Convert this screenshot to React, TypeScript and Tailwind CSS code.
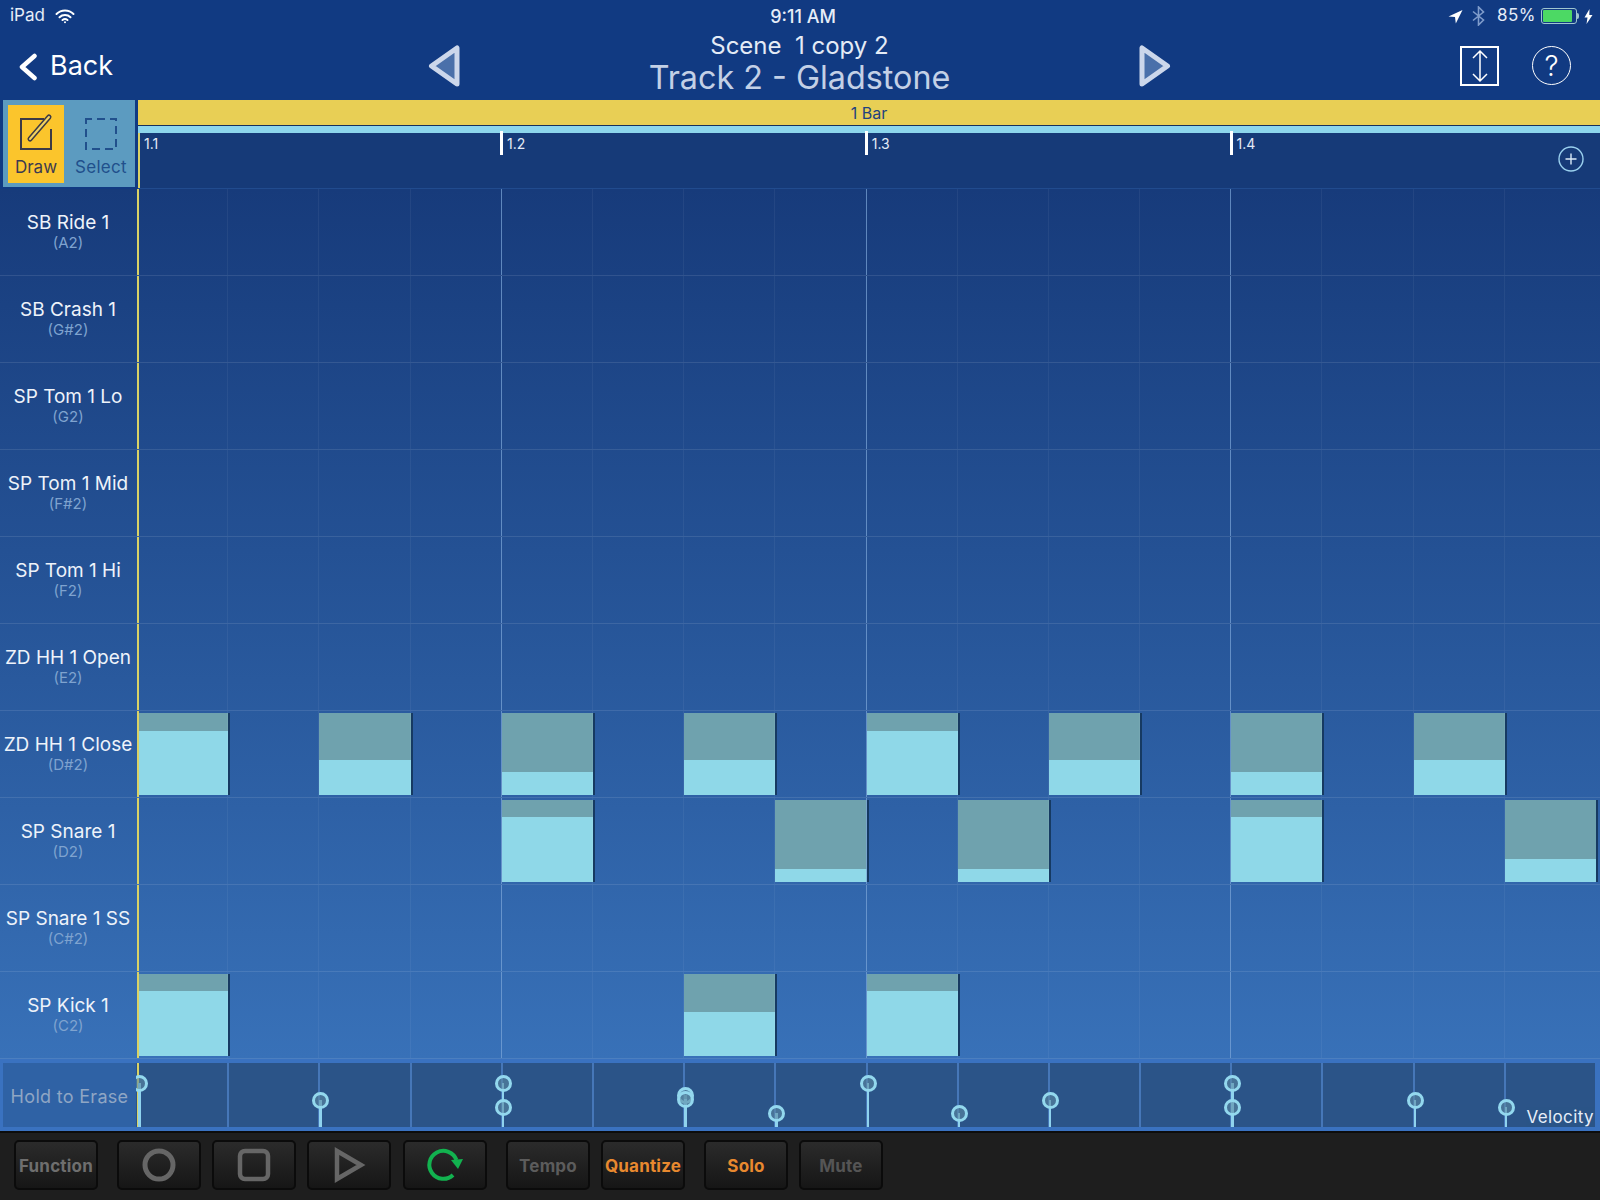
const rows = [
  { name: "SB Ride 1", note: "(A2)" },
  { name: "SB Crash 1", note: "(G#2)" },
  { name: "SP Tom 1 Lo", note: "(G2)" },
  { name: "SP Tom 1 Mid", note: "(F#2)" },
  { name: "SP Tom 1 Hi", note: "(F2)" },
  { name: "ZD HH 1 Open", note: "(E2)" },
  { name: "ZD HH 1 Close", note: "(D#2)" },
  { name: "SP Snare 1", note: "(D2)" },
  { name: "SP Snare 1 SS", note: "(C#2)" },
  { name: "SP Kick 1", note: "(C2)" },
];

// step -> height of the light part of the note, per row
const notes: Record<number, Record<number, number>> = {
  6: { 0: 64, 2: 35, 4: 23, 6: 35, 8: 64, 10: 35, 12: 23, 14: 35 },
  7: { 4: 65, 7: 13, 9: 13, 12: 65, 15: 23 },
  9: { 0: 65, 6: 44, 8: 65 },
};

// step -> pin heights in the velocity strip (y from top of strip)
const pins: Record<number, number[]> = {
  0: [20],
  2: [37],
  4: [20, 44],
  6: [32, 36],
  7: [50],
  8: [20],
  9: [50],
  10: [37],
  12: [20, 44],
  14: [37],
  15: [44],
};

const steps = Array.from({ length: 16 }, (_, i) => i);

function Triangle({ flip }: { flip?: boolean }) {
  return (
    <svg width="34" height="46" viewBox="0 0 34 46" className={flip ? "-scale-x-100" : ""}>
      <polygon
        points="4.500 23 30 5 30 41"
        fill="#4a70aa"
        stroke="#ccd7eb"
        strokeWidth="5"
        strokeLinejoin="round"
      />
    </svg>
  );
}

function StatusBar() {
  return (
    <div className="grid h-[30px] grid-cols-3 items-center pl-[10px] pr-[7px] pt-[2px] text-[17px] text-[#e6edf8]">
      <div className="flex items-center gap-[10px]">
        <span>iPad</span>
        <svg width="20" height="15" viewBox="0 0 20 15" fill="none" stroke="#fff" strokeLinecap="round">
          <path d="M1.5 5a12 12 0 0 1 17 0" strokeWidth="2" />
          <path d="M4.5 8.2a8 8 0 0 1 11 0" strokeWidth="2" />
          <path d="M7.5 11a4 4 0 0 1 5 0" strokeWidth="2" />
          <circle cx="10" cy="13.2" r="1" fill="#fff" stroke="none" />
        </svg>
      </div>
      <div className="pl-[3px] text-center text-[18px] font-medium">9:11 AM</div>
      <div className="flex items-center justify-end">
        <svg width="15" height="15" viewBox="0 0 15 15" fill="#fff">
          <path d="M14.5 1 0.5 7.5l6.5.6.8 6.4z" />
        </svg>
        <svg width="13" height="20" viewBox="0 0 13 20" fill="none" stroke="#7f9ccb" strokeWidth="1.6" className="ml-[9px]">
          <path d="M1 5.5 11.5 14 6.5 19V1l5 5L1 14.500" />
        </svg>
        <span className="ml-[12px] tracking-[0.5px]">85%</span>
        <div className="ml-[5px] flex items-center">
          <div className="h-[16px] w-[36px] rounded-[3px] border border-[#9fc6cf] p-[1px]">
            <div className="h-full w-[29px] rounded-[1px] bg-[#4cd964]" />
          </div>
          <div className="h-[6px] w-[2px] rounded-r-sm bg-[#9fc6cf]" />
        </div>
        <svg width="9" height="15" viewBox="0 0 9 15" fill="#fff" className="ml-[5px]">
          <path d="M5.500 0 0.500 8.500h3L2.500 15l6-9H5.300z" />
        </svg>
      </div>
    </div>
  );
}

function NavBar() {
  return (
    <div className="grid h-[70px] grid-cols-[400px_800px_400px] items-center">
      <div className="flex items-center pl-[18px] pt-[3px]">
        <svg width="20" height="28" viewBox="0 0 20 28" fill="none" stroke="#fff" strokeWidth="4.500" strokeLinecap="round" strokeLinejoin="round">
          <path d="M16.500 3 4 14l12.500 11" />
        </svg>
        <span className="ml-[12px] text-[27px] text-white">Back</span>
      </div>
      <div className="flex items-center justify-between pl-[27px] pr-[28px] pt-[1px]">
        <Triangle />
        <div className="flex flex-col items-center pb-[3px] leading-none">
          <span className="whitespace-pre text-[24px] leading-[28px] text-[#e4ebf6]">Scene  1 copy 2</span>
          <span className="text-[32.300px] leading-[36px] text-[#c3d0e6]">Track 2 - Gladstone</span>
        </div>
        <Triangle flip />
      </div>
      <div className="flex items-center justify-end gap-[33px] pr-[29px] pt-[1px]">
        <div className="flex h-[40px] w-[39px] items-center justify-center border-2 border-white">
          <svg width="16" height="34" viewBox="0 0 16 34" fill="none" stroke="#fff" strokeWidth="1.500">
            <path d="M8 2v30M1 9l7-7 7 7M1 25l7 7 7-7" />
          </svg>
        </div>
        <div className="flex h-[39px] w-[39px] items-center justify-center rounded-full border-[1.500px] border-white text-[28px] font-light leading-none text-white">
          ?
        </div>
      </div>
    </div>
  );
}

function ToolRow() {
  return (
    <div className="flex h-[89px]">
      <div className="ml-[3px] flex h-[87px] w-[132px] shrink-0 bg-[#5c9bc0] pb-[4px] pl-[5px] pt-[5px]">
        <div className="flex w-[56px] shrink-0 flex-col items-center bg-[#fbc52c] pt-[7px]">
          <svg width="40" height="38" viewBox="0 0 40 38" fill="none">
            <path d="M28 7H5v30h30V17" stroke="#3c3a45" strokeWidth="2" />
            <path d="M14 27 33 5" stroke="#3c3a45" strokeWidth="5" strokeLinecap="round" />
            <path d="M14 27 33 5" stroke="#f4d35e" strokeWidth="2" strokeLinecap="round" />
          </svg>
          <span className="mt-[6px] text-[17px] leading-[22px] text-[#3b3a50]">Draw</span>
        </div>
        <div className="flex w-[71px] shrink-0 flex-col items-center pl-[3px] pt-[7px]">
          <svg width="40" height="38" viewBox="0 0 40 38" fill="none">
            <rect x="5" y="7" width="30" height="30" stroke="#21508c" strokeWidth="2" strokeDasharray="8 5" strokeDashoffset="2" />
          </svg>
          <span className="mt-[6px] text-[17px] leading-[22px] tracking-[0.3px] text-[#21508c]">Select</span>
        </div>
      </div>
      <div className="ml-[3px] flex min-w-0 flex-1 flex-col border-b border-[#214b8e] bg-[#163a78]">
        <div className="flex h-[26px] items-center justify-center border-b border-[#17305a] bg-[#e8cf55] text-[16px] text-[#21427f]">
          1 Bar
        </div>
        <div className="h-[7px] bg-[#8dd6ec]" />
        <div className="flex flex-1">
          {["1.1", "1.2", "1.3", "1.4"].map((label, i) => (
            <div
              key={label}
              className={`flex shrink-0 items-start ${i === 0 ? "w-[362px] border-l-2 border-[#d9d266] pl-[2px]" : "w-[364.750px]"}`}
            >
              {i > 0 && <div className="-mt-[2px] h-[24px] w-[3px] bg-white" />}
              <span className={`${i > 0 ? "ml-[4px]" : "ml-[2px]"} mt-[3px] text-[14px] leading-[16px] text-[#e4ebf6]`}>{label}</span>
              {i === 3 && (
                <svg width="26" height="26" viewBox="0 0 26 26" fill="none" stroke="#9ad0ee" strokeWidth="1.400" className="ml-auto mr-[10px] mt-[13px]">
                  <circle cx="13" cy="13" r="12" />
                  <path d="M13 7.500v11M7.500 13h11" stroke="#dbeaf8" />
                </svg>
              )}
            </div>
          ))}
        </div>
      </div>
    </div>
  );
}

function Note({ light }: { light: number }) {
  return (
    <div className="-mr-[3px] mt-[2px] flex h-[82px] flex-col border-r-2 border-[#163a62]">
      <div className="flex-1 bg-[#6fa2ae]" />
      <div className="bg-[#8fd8e8]" style={{ height: light }} />
    </div>
  );
}

function TrackRow({ index, name, note }: { index: number; name: string; note: string }) {
  return (
    <div className="flex h-[87px] border-b border-white/10">
      <div className="flex w-[136px] shrink-0 flex-col items-center justify-center pb-[1px]">
        <span className="whitespace-nowrap text-[19px] leading-[24px] text-[#eef3fa]">{name}</span>
        <span className="-mt-[1px] text-[15px] leading-[18px] text-[#7fa3cf]">{note}</span>
      </div>
      <div className="grid w-[1459px] shrink-0 grid-cols-16">
        {steps.map((s) => (
          <div
            key={s}
            className={
              s === 0
                ? "ml-[1px] border-l-2 border-[#d9d266]"
                : s % 4 === 0
                  ? "border-l-[1.500px] border-[#7ea6d8]/70"
                  : "border-l border-white/5"
            }
          >
            {notes[index]?.[s] !== undefined && <Note light={notes[index][s]} />}
          </div>
        ))}
      </div>
    </div>
  );
}

function VelocityStrip() {
  return (
    <div className="flex h-[72px] border-y-4 border-[#3a72c0] bg-[#3a72c0]">
      <div className="ml-[3px] flex w-[133px] shrink-0 items-center justify-center bg-[#2f62a5] pt-[2px] text-[18px] tracking-[0.3px] text-[#8fa6c4]">
        Hold to Erase
      </div>
      <div className="relative grid w-[1459px] shrink-0 grid-cols-16 overflow-hidden bg-[#2b5488]">
        {steps.map((s) => (
          <div
            key={s}
            className={`relative ${s === 0 ? "ml-[1px] border-l-2 border-[#d9d266]" : "border-l-2 border-[#4677b8]"}`}
          >
            {pins[s]?.map((y) => (
              <div key={y} className="absolute inset-0">
                <div className="absolute left-[-1px] w-[2.500px] bg-[#8fd3ee]" style={{ top: y, bottom: 0 }} />
                <div
                  className="absolute left-[-8px] h-[17px] w-[17px] rounded-full border-[3px] border-[#93d8ee] bg-[#5b8aa4]/60"
                  style={{ top: y - 8 }}
                />
              </div>
            ))}
          </div>
        ))}
        <span className="absolute bottom-0 right-[1px] bg-[#2b5488]/70 text-[17px] leading-[20px] tracking-[0.4px] text-[#e6edf8]">
          Velocity
        </span>
      </div>
    </div>
  );
}

function ToolbarButton({ children, className = "" }: { children: React.ReactNode; className?: string }) {
  return (
    <div
      className={`flex h-[50px] w-[84px] shrink-0 items-center justify-center rounded-[5px] border-2 border-[#0b0b0b] bg-linear-to-b from-[#2b2b2b] to-[#161616] text-[17px] font-bold tracking-[0.2px] ${className}`}
    >
      {children}
    </div>
  );
}

function Toolbar() {
  return (
    <div className="flex h-[69px] items-start border-t-2 border-[#0c0c0c] bg-[#1e1e1e] pl-[14px] pt-[7px]">
      <ToolbarButton className="pt-[3px] text-[#6e6e6e]">Function</ToolbarButton>
      <ToolbarButton className="ml-[19px]">
        <svg width="36" height="36" viewBox="0 0 36 36" fill="none" stroke="#666" strokeWidth="5">
          <circle cx="18" cy="18" r="14" />
        </svg>
      </ToolbarButton>
      <ToolbarButton className="ml-[11px]">
        <svg width="36" height="36" viewBox="0 0 36 36" fill="none" stroke="#666" strokeWidth="4.500">
          <rect x="4" y="4" width="28" height="28" rx="5" />
        </svg>
      </ToolbarButton>
      <ToolbarButton className="ml-[11px]">
        <svg width="36" height="36" viewBox="0 0 36 36" fill="none" stroke="#666" strokeWidth="4.500">
          <polygon points="6 4 30 18 6 32" />
        </svg>
      </ToolbarButton>
      <ToolbarButton className="ml-[12px]">
        <svg width="40" height="38" viewBox="0 0 40 38" fill="none" stroke="#12b24f" strokeWidth="4">
          <path d="M31.500 14A14 14 0 1 0 28 29" />
          <polygon points="26 14 38 13 33 23" fill="#12b24f" stroke="none" />
        </svg>
      </ToolbarButton>
      <ToolbarButton className="ml-[19px] pt-[3px] text-[#5c5c5c]">Tempo</ToolbarButton>
      <ToolbarButton className="ml-[11px] pt-[3px] text-[#e8892f]">Quantize</ToolbarButton>
      <ToolbarButton className="ml-[19px] pt-[3px] text-[#e8892f]">Solo</ToolbarButton>
      <ToolbarButton className="ml-[11px] pt-[3px] text-[#555555]">Mute</ToolbarButton>
    </div>
  );
}

export default function App() {
  return (
    <div className="flex h-[1200px] w-[1600px] flex-col overflow-hidden bg-[#113a82] font-['Inter','Liberation_Sans',sans-serif]">
      <StatusBar />
      <NavBar />
      <ToolRow />
      <div className="h-[870px] bg-linear-to-b from-[#173b7b] to-[#3871b8]">
        {rows.map((row, i) => (
          <TrackRow key={row.name} index={i} name={row.name} note={row.note} />
        ))}
      </div>
      <VelocityStrip />
      <Toolbar />
    </div>
  );
}
